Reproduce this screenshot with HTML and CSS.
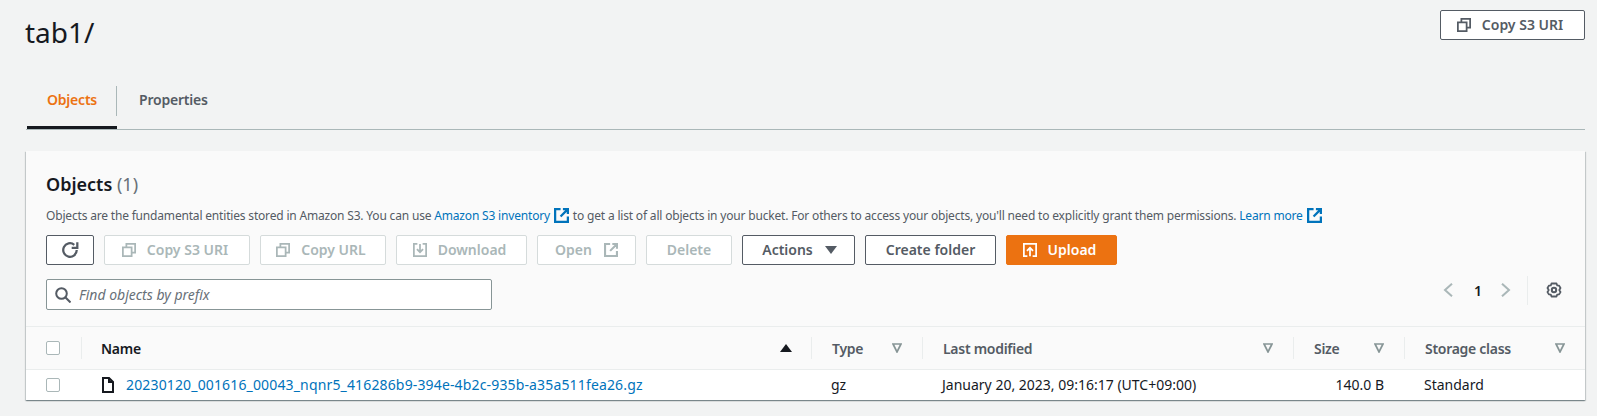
FILE: index.html
```html
<!DOCTYPE html>
<html lang="en">
<head>
<meta charset="utf-8">
<title>tab1/</title>
<link rel="stylesheet" href="styles.css">
</head>
<body>
<svg class="defs" width="0" height="0" aria-hidden="true">
  <symbol id="i-copy" viewBox="0 0 16 16"><path d="M1 5h10v10H1zM5 5V1h10v10h-4" fill="none" stroke="currentColor" stroke-width="2"/></symbol>
  <symbol id="i-ext" viewBox="0 0 16 16"><path d="M7 1.200H1.200v13.600h13.600V9M14 2L7 9M9.500 1.200h5.300v5.300" fill="none" stroke="currentColor" stroke-width="2.400"/></symbol>
  <symbol id="i-down" viewBox="0 0 16 16"><path d="M5 1H1v14h14V1h-4M8 1v9M4.500 7L8 10.500 11.500 7" fill="none" stroke="currentColor" stroke-width="2"/></symbol>
  <symbol id="i-filter" viewBox="0 0 10 10"><path d="M1 1h8L5 9z" fill="none" stroke="currentColor" stroke-width="1.700"/></symbol>
</svg>
<main class="page">
  <header class="head">
    <h1 class="title">tab1/</h1>
    <button class="btn btn-normal"><svg class="ico"><use href="#i-copy"/></svg>Copy S3 URI</button>
  </header>
  <nav class="tabs">
    <span class="tab tab-active">Objects</span>
    <span class="tab">Properties</span>
  </nav>
  <section class="panel">
    <div class="panel-head">
      <h2 class="panel-title">Objects <span class="count">(1)</span></h2>
      <p class="desc">Objects are the fundamental entities stored in Amazon S3. You can use <a class="link">Amazon S3 inventory</a> <svg class="ext"><use href="#i-ext"/></svg> to get a list of all objects in your bucket. For others to access your objects, you'll need to explicitly grant them permissions. <a class="link">Learn more</a> <svg class="ext"><use href="#i-ext"/></svg></p>
      <div class="actions">
        <button class="btn btn-normal btn-refresh" aria-label="Refresh"><svg class="ico-solo" viewBox="0 0 16 16"><path d="M14 8a6 6 0 1 1-2.200-4.650" fill="none" stroke="currentColor" stroke-width="2"/><path d="M14.500 1v5h-5" fill="none" stroke="currentColor" stroke-width="2"/></svg></button>
        <button class="btn btn-off w-uri"><svg class="ico"><use href="#i-copy"/></svg>Copy S3 URI</button>
        <button class="btn btn-off w-url"><svg class="ico"><use href="#i-copy"/></svg>Copy URL</button>
        <button class="btn btn-off w-dl"><svg class="ico"><use href="#i-down"/></svg>Download</button>
        <button class="btn btn-off w-open">Open<svg class="ico ico-right"><use href="#i-ext"/></svg></button>
        <button class="btn btn-off w-del">Delete</button>
        <button class="btn btn-normal w-act">Actions<span class="caret"></span></button>
        <button class="btn btn-normal w-new">Create folder</button>
        <button class="btn btn-primary w-up"><svg class="ico" viewBox="0 0 16 16"><path d="M5 15H1V1h14v14h-4M8 15V6M4.500 9L8 5.500 11.500 9" fill="none" stroke="currentColor" stroke-width="2"/></svg>Upload</button>
      </div>
      <div class="tools">
        <label class="search">
          <svg class="search-ico" viewBox="0 0 16 16"><circle cx="6.500" cy="6.500" r="5.300" fill="none" stroke="currentColor" stroke-width="2"/><path d="M10.300 10.300L15.500 15.500" stroke="currentColor" stroke-width="2"/></svg>
          <span class="placeholder">Find objects by prefix</span>
        </label>
        <div class="pager">
          <svg class="chev" viewBox="0 0 10 14"><path d="M9 .7L2 7l7 6.300" fill="none" stroke="currentColor" stroke-width="2"/></svg>
          <span class="page-no">1</span>
          <svg class="chev" viewBox="0 0 10 14"><path d="M1 .7L8 7l-7 6.300" fill="none" stroke="currentColor" stroke-width="2"/></svg>
          <span class="pager-sep"></span>
          <svg class="gear" viewBox="0 0 16 16"><circle cx="8" cy="8" r="2.200" fill="none" stroke="currentColor" stroke-width="2"/><path d="M5.500 1.500h5l.7 1.800 1.900.300 1.400 2.400-1.200 2 1.200 2-1.400 2.400-1.900.300-.7 1.800h-5l-.7-1.800-1.900-.300-1.400-2.400 1.200-2-1.200-2 1.400-2.400 1.900-.300z" fill="none" stroke="currentColor" stroke-width="1.800" stroke-linejoin="round"/></svg>
        </div>
      </div>
    </div>
    <table class="grid">
      <colgroup><col class="c-check"><col class="c-name"><col class="c-type"><col class="c-date"><col class="c-size"><col class="c-class"></colgroup>
      <thead>
        <tr>
          <th class="th-check"><span class="check"></span></th>
          <th class="th-first"><span class="th-in th-sorted">Name<span class="sort"></span></span></th>
          <th><span class="th-in">Type<svg class="filter"><use href="#i-filter"/></svg></span></th>
          <th><span class="th-in">Last modified<svg class="filter"><use href="#i-filter"/></svg></span></th>
          <th><span class="th-in">Size<svg class="filter"><use href="#i-filter"/></svg></span></th>
          <th><span class="th-in">Storage class<svg class="filter"><use href="#i-filter"/></svg></span></th>
        </tr>
      </thead>
      <tbody>
        <tr>
          <td class="td-check"><span class="check"></span></td>
          <td class="td-first"><span class="file"><svg class="file-ico" viewBox="0 0 14 16"><path d="M2 1h6l4 4v10H2zM8 1v4h4" fill="none" stroke="currentColor" stroke-width="2"/></svg><a class="link file-link">20230120_001616_00043_nqnr5_416286b9-394e-4b2c-935b-a35a511fea26.gz</a></span></td>
          <td>gz</td>
          <td>January 20, 2023, 09:16:17 (UTC+09:00)</td>
          <td class="td-size">140.0 B</td>
          <td>Standard</td>
        </tr>
      </tbody>
    </table>
  </section>
</main>
</body>
</html>
```
FILE: styles.css
```css
* { box-sizing: border-box; }
html, body { margin: 0; height: 416px; overflow: hidden; }
body { background: #f2f3f3; color: #16191f; font-family: "Noto Sans", "Open Sans", sans-serif; font-size: 14px; }
.defs { position: absolute; }
.page { padding: 10px 12px 0 26px; }
.head { display: flex; justify-content: space-between; align-items: flex-start; height: 75px; }
.title { margin: 0; font-size: 28px; line-height: 44px; font-weight: 400; margin-left: -1px; }
.btn { display: inline-flex; align-items: center; justify-content: center; height: 30px; padding: 0 18px; border: 1px solid; border-radius: 2px; background: #fff; font: inherit; font-weight: 600; font-size: 14px; line-height: 20px; white-space: nowrap; }
.btn-normal { color: #545b64; border-color: #545b64; }
.btn-off { color: #aab7b8; border-color: #d5dbdb; }
.btn-primary { background: #ec7211; border-color: #ec7211; color: #fff; }
.ico { width: 14px; height: 14px; margin-right: 11px; flex: none; }
.ico-right { margin: 0 0 0 12px; }
.head .btn { width: 145px; padding: 0 5px 0 0; }
.tabs { display: flex; height: 45px; border-bottom: 1px solid #aab7b8; }
.tab { position: relative; display: flex; align-items: center; height: 44px; padding: 0 20px 15px; font-weight: 600; color: #545b64; letter-spacing: -.2px; }
.tab-active { width: 90px; margin-left: 1px; color: #ec7211; border-bottom: 3px solid #16191f; justify-content: center; padding: 0 0 12px; }
.tab-active::after { content: ""; position: absolute; right: 0; top: 1px; width: 1px; height: 30px; background: #aab7b8; }
.tab:not(.tab-active) { padding-left: 22px; }
.panel { margin-top: 21px; height: 249px; background: #fafafa; box-shadow: 0 1px 1px 0 rgba(0,28,36,.3), 1px 1px 1px 0 rgba(0,28,36,.15), -1px 1px 1px 0 rgba(0,28,36,.15); }
.panel-head { height: 175px; padding: 19px 20px 0 20px; }
.panel-title { margin: 0; font-size: 18px; line-height: 28px; font-weight: 600; }
.count { font-weight: 400; color: #687078; }
.desc { margin: 7px 0 0; font-size: 12px; line-height: 22px; height: 22px; white-space: nowrap; color: #545b64; letter-spacing: -.18px; }
.link { color: #0073bb; }
.file-link { letter-spacing: .15px; }
.ext { width: 15px; height: 15px; margin: 0 1px; color: #0073bb; vertical-align: -3px; }
.actions { display: flex; gap: 10px; margin-top: 8px; }
.btn-refresh { width: 48px; padding: 0; }
.ico-solo { width: 18px; height: 18px; }
.w-uri { width: 146px; padding: 0 4px 0 0; }
.w-url { width: 126px; padding: 0 4px 0 0; }
.w-dl { width: 131px; padding: 0 4px 0 0; }
.w-open { width: 99px; padding: 0; }
.w-del { width: 86px; padding: 0; }
.w-act { width: 113px; padding: 0 0 0 2px; }
.w-new { width: 131px; padding: 0; }
.w-up { width: 111px; padding: 0 4px 0 0; }
.caret { width: 0; height: 0; margin-left: 12px; border-left: 6px solid transparent; border-right: 6px solid transparent; border-top: 8px solid #545b64; }
.tools { display: flex; justify-content: space-between; align-items: flex-start; margin-top: 14px; }
.search { display: flex; align-items: center; width: 446px; height: 31px; padding-left: 8px; border: 1px solid #879596; border-radius: 2px; background: #fff; color: #545b64; }
.search-ico { width: 16px; height: 16px; margin-right: 8px; }
.placeholder { font-style: italic; color: #687078; }
.pager { display: flex; align-items: center; height: 30px; margin-top: -4px; padding-right: 3px; color: #aab7b8; }
.chev { width: 10px; height: 14px; }
.page-no { width: 48px; padding-left: 2px; text-align: center; font-weight: 600; font-size: 14px; color: #16191f; }
.pager-sep { width: 1px; height: 29px; margin: 0 18px 0 16px; background: #eaeded; }
.gear { width: 16px; height: 16px; color: #545b64; }
.grid { width: 1559px; table-layout: fixed; border-collapse: collapse; }
.c-check { width: 55px; } .c-name { width: 730px; } .c-type { width: 111px; } .c-date { width: 371px; } .c-size { width: 111px; } .c-class { width: 181px; }
.grid th { height: 43px; padding: 0; text-align: left; font-size: 14px; font-weight: 600; letter-spacing: -.28px; color: #545b64; background: #fafafa; border-top: 1px solid #eaeded; border-bottom: 1px solid #eaeded; }
.th-in { display: flex; align-items: center; justify-content: space-between; height: 22px; padding: 0 20px; border-left: 1px solid #eaeded; }
.grid .th-first { color: #16191f; }
.th-sorted { padding: 0 19px 0 19px; }
.sort { width: 0; height: 0; border-left: 6px solid transparent; border-right: 6px solid transparent; border-bottom: 8px solid #16191f; }
.filter { width: 10px; height: 10px; color: #879596; }
.grid td { height: 30px; padding: 0 0 0 20px; background: #fff; color: #16191f; }
.grid .td-check, .grid .th-check { padding: 0 0 0 20px; }
.check { display: block; width: 14px; height: 14px; background: #fff; border: 1px solid #aab7b8; border-radius: 2px; }
.grid .td-size { padding: 0 20px 0 0; text-align: right; }
.file { display: flex; align-items: center; gap: 11px; white-space: nowrap; }
.file-ico { width: 14px; height: 16px; flex: none; color: #16191f; }
```
